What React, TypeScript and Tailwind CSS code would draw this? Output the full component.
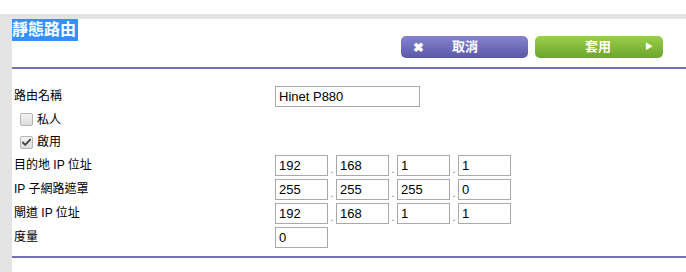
import { Check } from "lucide-react";

const font = { fontFamily: '"Liberation Sans", "Noto Sans CJK TC", sans-serif' };

function IpField({ parts }: { parts: string[] }) {
  return (
    <div className="flex items-end h-[21px]">
      {parts.map((p, i) => (
        <div key={i} className="flex items-end">
          {i > 0 && <span className="w-[8px] text-center text-[11px] leading-none text-gray-500 pb-[1px]">.</span>}
          <div className="w-[53px] h-[21px] border border-[#a9a9a9] bg-white px-[3px] text-[13px] leading-[19px] text-black">
            {p}
          </div>
        </div>
      ))}
    </div>
  );
}

function Row({ label, children }: { label: React.ReactNode; children?: React.ReactNode }) {
  return (
    <div className="flex items-center h-[24px]">
      <div className="w-[263px] pl-[2px] text-[12px] text-black">{label}</div>
      {children}
    </div>
  );
}

function CheckRow({ label, checked, h }: { label: string; checked?: boolean; h: string }) {
  return (
    <div className={`flex items-center pl-[8px] text-[12px] text-black ${h}`}>
      <div className="w-[13px] h-[13px] border border-[#b5b5b5] rounded-[2px] bg-gradient-to-b from-[#f3f3f3] to-[#dcdcdc] flex items-center justify-center mr-[4px]">
        {checked && <Check size={11} strokeWidth={4} className="text-[#444]" />}
      </div>
      {label}
    </div>
  );
}

export default function App() {
  return (
    <div className="w-[686px] h-[272px] bg-white overflow-hidden" style={font}>
      <div className="h-[14px] bg-white" />
      <div className="flex h-[258px] bg-[#e4e4e4]">
        <div className="w-[12px]" />
        <div className="flex-1 mt-[5px] bg-white">
          <div className="h-[48px] relative">
            <span className="absolute left-0 top-0 bg-[#3390ff] text-white text-[16px] font-bold leading-[22px] pr-[2px]">
              靜態路由
            </span>
            <div className="absolute left-[389px] top-[17px] flex gap-[7px]">
              <button className="w-[127px] h-[22px] rounded-[5px] bg-gradient-to-b from-[#8683cf] to-[#5b58a5] flex items-center text-white text-[13px] font-bold">
                <span className="w-[24px] pl-[10px] text-[13px] leading-none">✖</span>
                <span className="ml-[27px]">取消</span>
              </button>
              <button className="w-[128px] h-[22px] rounded-[5px] bg-gradient-to-b from-[#9bd04a] to-[#6ca52c] flex items-center text-white text-[13px] font-bold">
                <span className="ml-[50px]">套用</span>
                <span className="ml-auto mr-[10px] text-[8px]">▶</span>
              </button>
            </div>
          </div>
          <div className="h-[2px] bg-[#7471b7]" />
          <div className="pt-[15px]">
            <Row label="路由名稱">
              <div className="w-[145px] h-[21px] border border-[#a9a9a9] px-[3px] text-[13px] leading-[19px] text-black">
                Hinet P880
              </div>
            </Row>
            <CheckRow label="私人" h="h-[23px]" />
            <CheckRow label="啟用" checked h="h-[22px]" />
            <Row label="目的地 IP 位址">
              <IpField parts={["192", "168", "1", "1"]} />
            </Row>
            <Row label="IP 子網路遮罩">
              <IpField parts={["255", "255", "255", "0"]} />
            </Row>
            <Row label="閘道 IP 位址">
              <IpField parts={["192", "168", "1", "1"]} />
            </Row>
            <Row label="度量">
              <div className="w-[53px] h-[21px] border border-[#a9a9a9] px-[3px] text-[13px] leading-[19px] text-black">0</div>
            </Row>
          </div>
          <div className="mt-[7px] h-[2px] bg-[#7471b7]" />
        </div>
      </div>
    </div>
  );
}
